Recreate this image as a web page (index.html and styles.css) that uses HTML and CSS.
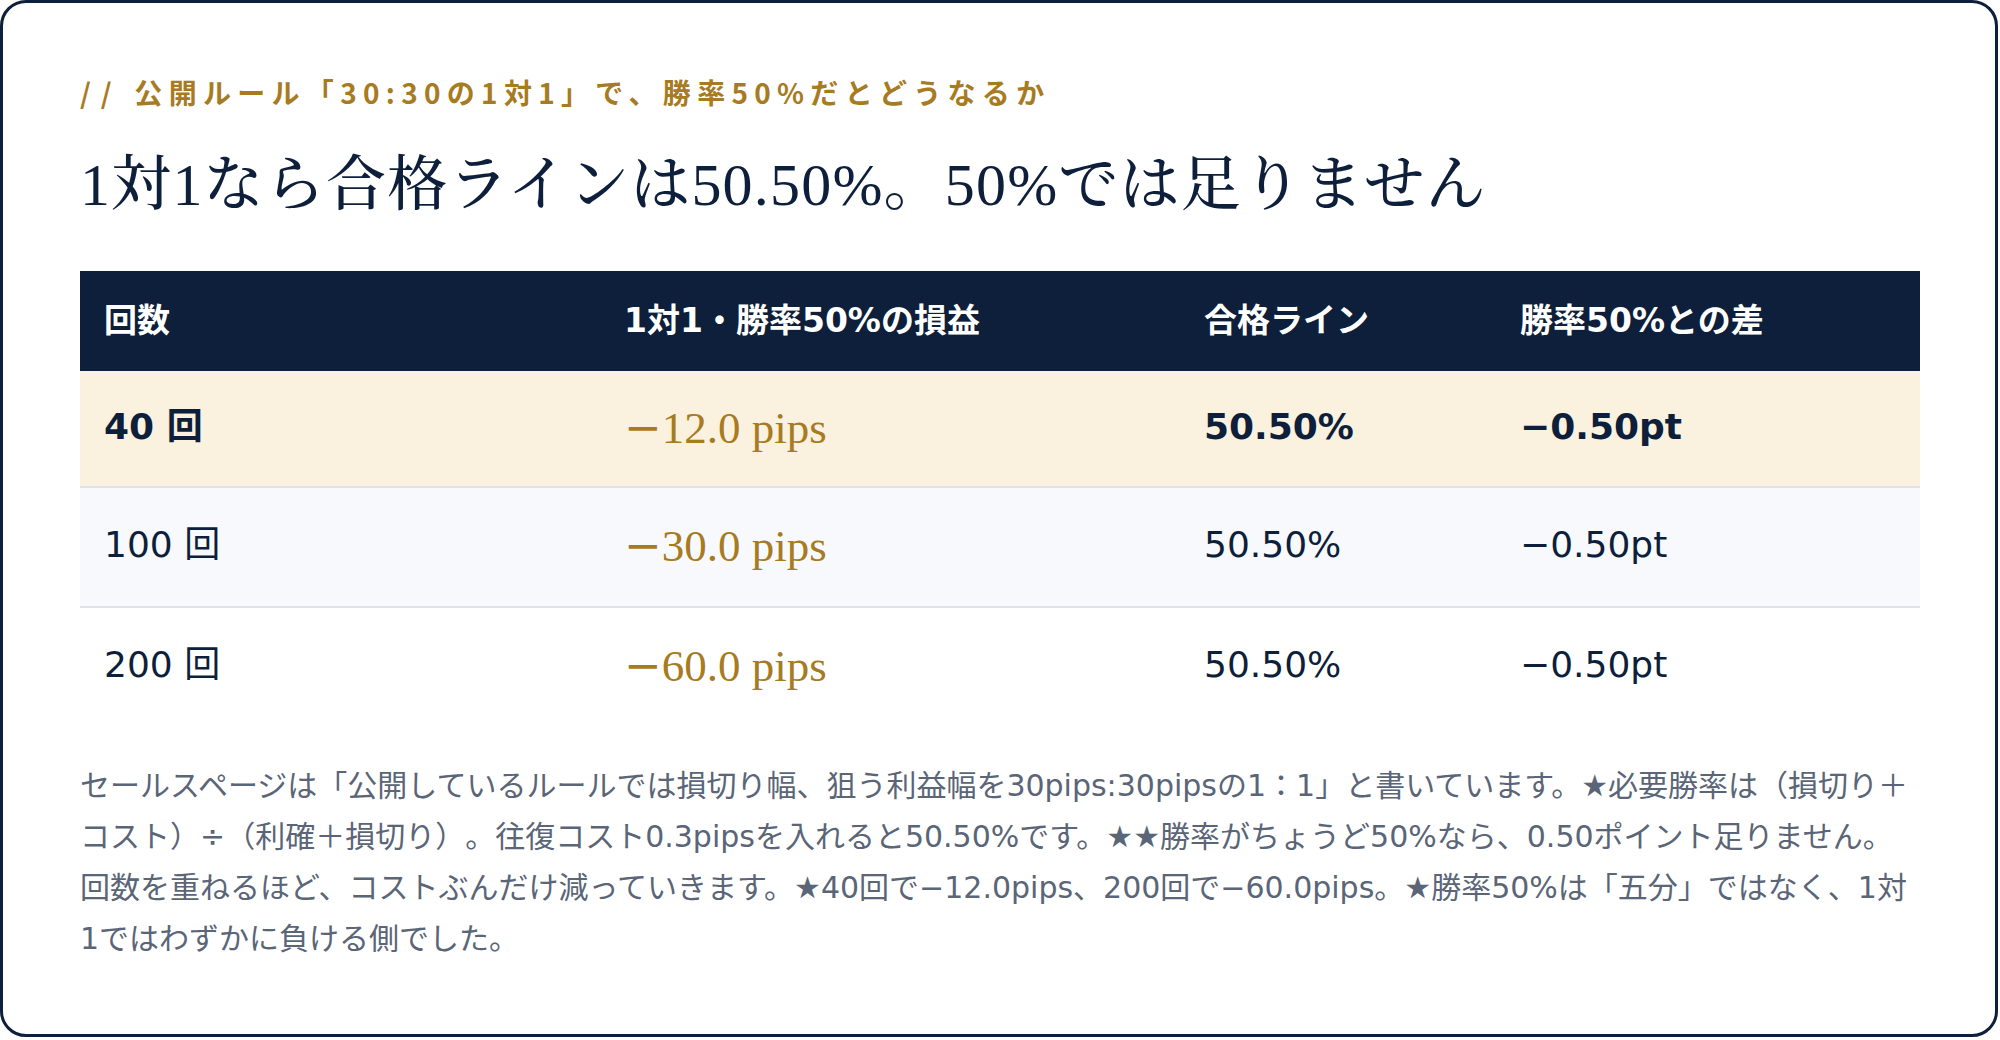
FILE: index.html
```html
<!DOCTYPE html>
<html lang="ja">
<head>
<meta charset="utf-8">
<title>1対1なら合格ラインは50.50%</title>
<link rel="stylesheet" href="styles.css">
</head>
<body>
<section class="card">
  <p class="eyebrow"><span class="mark">//</span> 公開ルール「30:30の1対1」で、勝率50%だとどうなるか</p>
  <h1 class="title">1対1なら合格ラインは50.50%。50%では足りません</h1>
  <table class="data">
    <colgroup>
      <col class="c1">
      <col class="c2">
      <col class="c3">
      <col class="c4">
    </colgroup>
    <thead>
      <tr>
        <th>回数</th>
        <th>1対1・勝率50%の損益</th>
        <th>合格ライン</th>
        <th>勝率50%との差</th>
      </tr>
    </thead>
    <tbody>
      <tr class="hl">
        <td>40 回</td>
        <td class="pips"><span class="minus">−</span>12.0 pips</td>
        <td>50.50%</td>
        <td>−0.50pt</td>
      </tr>
      <tr class="alt">
        <td>100 回</td>
        <td class="pips"><span class="minus">−</span>30.0 pips</td>
        <td>50.50%</td>
        <td>−0.50pt</td>
      </tr>
      <tr class="last">
        <td>200 回</td>
        <td class="pips"><span class="minus">−</span>60.0 pips</td>
        <td>50.50%</td>
        <td>−0.50pt</td>
      </tr>
    </tbody>
  </table>
  <p class="note">セールスページは「公開しているルールでは損切り幅、狙う利益幅を30pips:30pipsの1：1」と書いています。★必要勝率は（損切り＋コスト）÷（利確＋損切り）。往復コスト0.3pipsを入れると50.50%です。★★勝率がちょうど50%なら、0.50ポイント足りません。回数を重ねるほど、コストぶんだけ減っていきます。★40回で−12.0pips、200回で−60.0pips。★勝率50%は「五分」ではなく、1対1ではわずかに負ける側でした。</p>
</section>
</body>
</html>
```

FILE: styles.css
```css
* {
  box-sizing: border-box;
}

html, body {
  margin: 0;
  padding: 0;
  background: #ffffff;
}

body {
  font-family: "DejaVu Sans", "Noto Sans CJK JP", sans-serif;
  color: #0d1f3a;
  text-spacing-trim: space-all;
}

.card {
  width: 1998px;
  height: 1037px;
  border: 3px solid #0d1f3a;
  border-radius: 26px;
  padding: 69px 75px 0 77px;
  background: #ffffff;
}

.eyebrow {
  margin: 0 0 33px;
  font-family: "Noto Sans CJK JP", sans-serif;
  font-size: 28px;
  line-height: 40px;
  font-weight: 700;
  letter-spacing: 0.225em;
  color: #a77b1f;
}

.eyebrow .mark {
  letter-spacing: 10px;
}

.title {
  margin: 0 0 46px;
  font-family: "Liberation Serif", "Noto Serif CJK JP", serif;
  font-size: 60px;
  line-height: 80px;
  font-weight: 500;
  letter-spacing: 0.02em;
  color: #0d1f3a;
}

.data {
  width: 100%;
  border-collapse: collapse;
  table-layout: fixed;
}

.c1 { width: 520px; }
.c2 { width: 580px; }
.c3 { width: 316px; }
.c4 { width: auto; }

.data th {
  background: #0d1f3a;
  color: #ffffff;
  text-align: left;
  font-size: 33px;
  line-height: 52px;
  font-weight: 700;
  padding: 24px 24px;
}

.data td {
  font-size: 36px;
  line-height: 60px;
  padding: 27px 24px 31px;
  color: #0d1f3a;
  border-bottom: 2px solid #dde3ea;
}

.data td.pips {
  padding: 28px 24px 30px;
}

.data tr.last td {
  border-bottom: none;
}

.data tr.hl td {
  background: #fbf1df;
  font-weight: 700;
  padding-top: 26px;
  padding-bottom: 29px;
}

.data tr.hl td.pips {
  padding-top: 27px;
  padding-bottom: 28px;
}

.data tr.alt td {
  background: #f7f9fc;
}

.data td.pips,
.data tr.hl td.pips {
  font-family: "Liberation Serif", "Noto Serif CJK JP", serif;
  font-size: 45px;
  font-weight: 400;
  color: #a77b1f;
}

.pips .minus {
  font-family: "DejaVu Sans", sans-serif;
  font-weight: 400;
}

.note {
  margin: 34px 0 0;
  font-size: 30px;
  line-height: 51px;
  color: #5a6577;
}
```
